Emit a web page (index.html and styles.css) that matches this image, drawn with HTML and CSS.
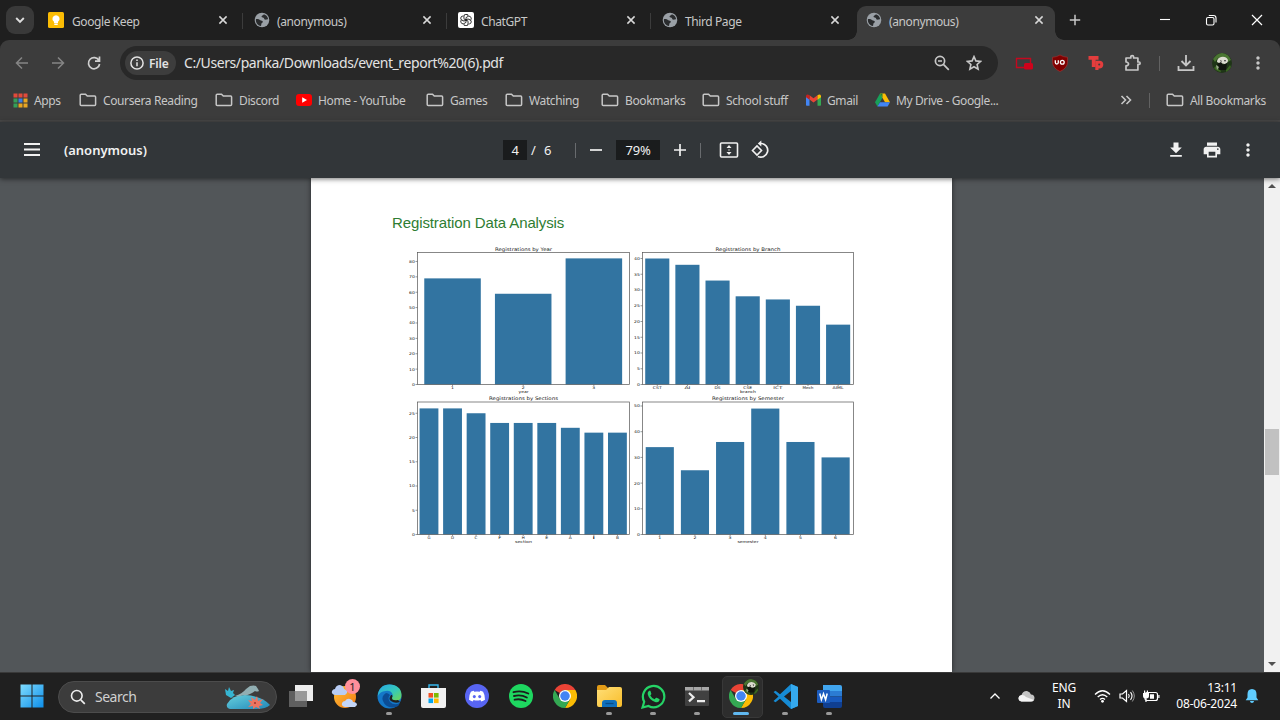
FILE: index.html
```html
<!DOCTYPE html>
<html lang="en">
<head>
<meta charset="utf-8">
<title>(anonymous)</title>
<link rel="stylesheet" href="styles.css">
</head>
<body>
<svg width="0" height="0" class="defs">
  <defs>
    <symbol id="close" viewBox="0 0 10 10"><path d="M1.400 1.400l7.200 7.200M8.600 1.400L1.400 8.600" stroke="currentColor" stroke-width="1.500"/></symbol>
    <symbol id="globe" viewBox="0 0 16 16"><circle cx="8" cy="8" r="7.300" fill="#9aa0a6"/><path d="M1.900 7.200c1.600-.3 3.300.2 4.400 1 .9.6 2.200.3 2.500 1.400.2 1-1.100 1.300-1.400 2.200-.2.7-.1 1.500-.4 2.100C3.600 13.500 1.600 10.500 1.900 7.200zM9.800 2.300c-.2 1.200-1.800 1-2.200 1.900-.4 1 1 1.300 1.900 1.600.7.300.5 1.400 1.300 1.800 1.100.4 2.200-.5 3.300-.3-.2-2.300-2-4.400-4.300-5z" fill="#2a2c2e"/></symbol>
    <symbol id="folder" viewBox="0 0 18 14"><path d="M1.200 2.200q0-1 1-1h4.300l1.800 1.900h7.300q1 0 1 1v7.400q0 1-1 1H2.200q-1 0-1-1z" fill="none" stroke="#c7c7c7" stroke-width="1.500"/></symbol>
    <symbol id="dots" viewBox="0 0 24 24"><path d="M12 8c1.100 0 2-.9 2-2s-.9-2-2-2-2 .9-2 2 .9 2 2 2zm0 2c-1.100 0-2 .9-2 2s.9 2 2 2 2-.9 2-2-.9-2-2-2zm0 6c-1.100 0-2 .9-2 2s.9 2 2 2 2-.9 2-2-.9-2-2-2z" fill="currentColor"/></symbol>
    <symbol id="chrome" viewBox="0 0 48 48"><path d="M24 12H44.800A24 24 0 0 1 24 48L34.400 30z" fill="#fbbc04"/><path d="M3.200 12A24 24 0 0 1 44.800 12H24A12 12 0 0 0 13.600 18z" fill="#ea4335"/><path d="M3.200 12L13.600 30L24 36L34.400 30L24 48A24 24 0 0 1 3.200 12z" fill="#34a853"/><circle cx="24" cy="24" r="12" fill="#fff"/><circle cx="24" cy="24" r="9.500" fill="#4285f4"/></symbol>
    <symbol id="avatar" viewBox="0 0 20 20"><circle cx="10" cy="10" r="10" fill="#1f3517"/><path d="M1 6q4-6 9-6 7 1 9 7l-3 2-5-5-5 1-3 4z" fill="#4a7532"/><path d="M2 15l4-4 3 8q-5-1-7-4zM14 17l4-5 1 2q-2 4-5 5z" fill="#3a6622"/><path d="M5 9q0-4 4-5 5-1 7 3 0 3-3 4l-6-1z" fill="#dcdcd0"/><path d="M5 11l4-2 2 3 4-2-1 7H7z" fill="#10140e"/><path d="M8 7l2 1-1 1zM12 7l2 0-1 2z" fill="#333"/><path d="M4 12l3 2-2 3z" fill="#9ba98c"/></symbol>
    <linearGradient id="win" x1="0" y1="0" x2="1" y2="1"><stop offset="0" stop-color="#7fdcff"/><stop offset="1" stop-color="#0d8ee9"/></linearGradient>
    <linearGradient id="edgeTop" x1="0" y1="0" x2="1" y2="1"><stop offset="0" stop-color="#27a7e5"/><stop offset=".55" stop-color="#36c9b8"/><stop offset="1" stop-color="#75d84b"/></linearGradient>
    <linearGradient id="sea" x1="0" y1="0" x2="1" y2="1"><stop offset="0" stop-color="#67d0dd"/><stop offset="1" stop-color="#2187b8"/></linearGradient>
    <linearGradient id="sun" x1="0" y1="0" x2="1" y2="1"><stop offset="0" stop-color="#ffc23a"/><stop offset="1" stop-color="#f27a12"/></linearGradient>
    <linearGradient id="fold" x1="0" y1="0" x2="1" y2="1"><stop offset="0" stop-color="#ffdf78"/><stop offset="1" stop-color="#f9bd2a"/></linearGradient>
  </defs>
</svg>

<div class="screen">
  <header class="tabstrip">
    <button class="tab-search"><svg width="12" height="12" viewBox="0 0 12 12"><path d="M2.200 4L6 7.800 9.800 4" fill="none" stroke="#dedede" stroke-width="1.900"/></svg></button>
    <div class="tab first"><svg class="fav" viewBox="0 0 16 16"><rect width="16" height="16" rx="1.500" fill="#fbbc04"/><path d="M8 3.200a3.600 3.600 0 0 0-2 6.600V11h4V9.800A3.600 3.600 0 0 0 8 3.200zM6.300 11.600h3.400v1.300H6.300z" fill="#fff"/></svg><span class="tt">Google Keep</span><svg class="x"><use href="#close"/></svg></div>
    <div class="tab"><svg class="fav"><use href="#globe"/></svg><span class="tt">(anonymous)</span><svg class="x"><use href="#close"/></svg></div>
    <div class="tab"><svg class="fav" viewBox="0 0 16 16"><rect width="16" height="16" rx="2" fill="#fff"/><g fill="none" stroke="#222" stroke-width=".9"><path id="lobe" d="M8 5.600L10.300 4.300Q12.500 3.500 13.200 6q.2 1-.4 1.900M8 5.600v2.800"/><use href="#lobe" transform="rotate(60 8 8)"/><use href="#lobe" transform="rotate(120 8 8)"/><use href="#lobe" transform="rotate(180 8 8)"/><use href="#lobe" transform="rotate(240 8 8)"/><use href="#lobe" transform="rotate(300 8 8)"/></g></svg><span class="tt">ChatGPT</span><svg class="x"><use href="#close"/></svg></div>
    <div class="tab last"><svg class="fav"><use href="#globe"/></svg><span class="tt">Third Page</span><svg class="x"><use href="#close"/></svg></div>
    <div class="tab active"><svg class="fav"><use href="#globe"/></svg><span class="tt">(anonymous)</span><svg class="x"><use href="#close"/></svg></div>
    <svg class="newtab" viewBox="0 0 12 12"><path d="M6 .8v10.400M.8 6h10.400" stroke="#c9c9c9" stroke-width="1.500"/></svg>
    <div class="wincontrols">
      <svg width="12" height="12" viewBox="0 0 12 12"><path d="M1 5.500h10" stroke="#fff" stroke-width="1.100"/></svg>
      <svg width="12" height="12" viewBox="0 0 12 12"><rect x="1.500" y="3.500" width="7.500" height="7.500" rx="1.500" fill="none" stroke="#fff" stroke-width="1.100"/><path d="M3.800 1.500h4.700q2.500 0 2.500 2.500v4.500" fill="none" stroke="#fff" stroke-width="1.100"/></svg>
      <svg width="12" height="12" viewBox="0 0 12 12"><path d="M1 1l10 10M11 1L1 11" stroke="#fff" stroke-width="1.200"/></svg>
    </div>
  </header>

  <div class="chrome-top">
    <div class="toolbar">
      <svg class="nav dim" viewBox="0 0 16 16"><path d="M14 8H3M8 2.500L2.500 8 8 13.500" fill="none" stroke="currentColor" stroke-width="1.500"/></svg>
      <svg class="nav dim" viewBox="0 0 16 16"><path d="M2 8h11M8 2.500L13.500 8 8 13.500" fill="none" stroke="currentColor" stroke-width="1.500"/></svg>
      <svg class="nav" viewBox="0 0 16 16"><path d="M13 5.500A5.600 5.600 0 1 0 13.600 9M13.500 1.600v4.600H9" fill="none" stroke="currentColor" stroke-width="1.700"/></svg>
      <div class="omnibox">
        <span class="chip"><svg width="14" height="14" viewBox="0 0 14 14"><circle cx="7" cy="7" r="6.100" fill="none" stroke="#e3e3e3" stroke-width="1.500"/><path d="M7 6.200v4M7 3.500v1.500" stroke="#e3e3e3" stroke-width="1.500"/></svg><b>File</b></span>
        <span class="url">C:/Users/panka/Downloads/event_report%20(6).pdf</span>
        <svg class="oi" viewBox="0 0 16 16"><circle cx="6" cy="6" r="4.600" fill="none" stroke="#c7c7c7" stroke-width="1.700"/><path d="M9.400 9.400l5.400 5.400M4 6h4" stroke="#c7c7c7" stroke-width="1.700"/></svg>
        <svg class="oi" viewBox="0 0 16 16"><path d="M8 1.600l1.900 4.300 4.700.5-3.500 3.100 1 4.600L8 11.700l-4.100 2.400 1-4.600L1.400 6.400l4.700-.5z" fill="none" stroke="#c7c7c7" stroke-width="1.600"/></svg>
      </div>
      <svg class="ext" viewBox="0 0 20 20"><path d="M10.500 14.500H2.500V5.500h14v5" fill="none" stroke="#c4081f" stroke-width="1.400"/><rect x="10" y="10" width="9" height="6.500" rx="1.500" fill="#d0021b"/></svg>
      <svg class="ext" viewBox="0 0 20 20"><path d="M10 2q3 2 7.500 2.300V9q0 6-7.500 9.500Q2.500 15 2.500 9V4.300Q7 4 10 2z" fill="#800000" stroke="#a33" stroke-width=".6"/><path d="M5.300 7.200v2.300q0 1.500 1.500 1.500t1.500-1.500V7.200" fill="none" stroke="#fff" stroke-width="1.300"/><circle cx="12.300" cy="9.200" r="1.900" fill="none" stroke="#fff" stroke-width="1.300"/></svg>
      <svg class="ext" viewBox="0 0 20 20"><path d="M2.500 3h10v3.800H9.600V14H5.800V6.800H2.500z" fill="#e33d3d"/><path d="M9.300 7.800h4q4 .2 4 3.900-.2 3.700-4 3.700h-.8V17H9.300z" fill="#e33d3d"/><circle cx="13.200" cy="11.500" r="1" fill="#3c3c3c"/></svg>
      <svg class="ext" viewBox="0 0 20 20"><path d="M3 5h4.800V3.800q0-1.200 1.400-1.200t1.400 1.200V5h4.300v4h1.200q1 0 1 1.200t-1 1.200h-1.200V17H3v-4.200q2.500-.3 2.500-1.900T3 9z" fill="none" stroke="#c7c7c7" stroke-width="1.700" stroke-linejoin="round"/></svg>
      <i class="vsep"></i>
      <svg class="ext" viewBox="0 0 20 20"><path d="M10 2v10M5.500 8l4.500 4.500L14.500 8M2.500 13v4.200h15V13" fill="none" stroke="#c7c7c7" stroke-width="1.800"/></svg>
      <svg class="ext"><use href="#avatar"/></svg>
      <svg class="ext gray"><use href="#dots"/></svg>
    </div>
    <nav class="bookmarks">
      <span><svg width="15" height="15" viewBox="0 0 15 15"><path d="M.5.500h4v4h-4zM5.500.500h4v4h-4zM10.500.500h4v4h-4z" fill="#e24a3b"/><path d="M.5 5.500h4v4h-4zM.5 10.500h4v4h-4z" fill="#34a058"/><path d="M5.500 5.500h4v4h-4z" fill="#3b7fe5"/><path d="M10.500 5.500h4v4h-4zM5.500 10.500h4v4h-4zM10.500 10.500h4v4h-4z" fill="#e8a623"/></svg>Apps</span>
      <span class="f"><svg width="18" height="14"><use href="#folder"/></svg>Coursera Reading</span>
      <span class="f"><svg width="18" height="14"><use href="#folder"/></svg>Discord</span>
      <span><svg width="16" height="12" viewBox="0 0 16 12"><rect width="16" height="12" rx="3" fill="#f00"/><path d="M6.200 3.300v5.400L11 6z" fill="#fff"/></svg>Home - YouTube</span>
      <span class="f"><svg width="18" height="14"><use href="#folder"/></svg>Games</span>
      <span class="f"><svg width="18" height="14"><use href="#folder"/></svg>Watching</span>
      <span class="f"><svg width="18" height="14"><use href="#folder"/></svg>Bookmarks</span>
      <span class="f"><svg width="18" height="14"><use href="#folder"/></svg>School stuff</span>
      <span><svg width="15" height="12" viewBox="0 0 15 12"><path d="M0 2v9q0 .8.8.8H3.500V4z" fill="#4285f4"/><path d="M15 2v9q0 .8-.8.8h-2.700V4z" fill="#34a853"/><path d="M3.500 1.300l4 3 4-3v4.300l-4 3-4-3z" fill="#ea4335"/><path d="M11.500 1.300Q14-.6 15 1.800V3.200l-3.500 2.500z" fill="#fbbc04"/><path d="M3.500 1.300Q1-.6 0 1.800v1.400l3.500 2.500z" fill="#c5221f"/></svg>Gmail</span>
      <span><svg width="15" height="14" viewBox="0 0 15 14"><path d="M5 .5L0 9.200l2.400 4.300L7.500 4.800z" fill="#18a05a"/><path d="M5 .5h5L15 9.200h-5z" fill="#fbbc04"/><path d="M5 .5h2.500v4.300z" fill="#188038"/><path d="M10 9.200h5l-2.400 4.300H2.400L5 9.200z" fill="#4285f4"/></svg>My Drive - Google...</span>
      <svg class="more" width="12" height="10" viewBox="0 0 12 10"><path d="M1.500 1l4 4-4 4M6.500 1l4 4-4 4" fill="none" stroke="#c7c7c7" stroke-width="1.600"/></svg>
      <i class="vsep"></i>
      <span class="f"><svg width="18" height="14"><use href="#folder"/></svg>All Bookmarks</span>
    </nav>
  </div>

  <div class="pdfbar">
    <svg class="menu" viewBox="0 0 16 13"><path d="M0 1h16M0 6.500h16M0 12h16" stroke="#f1f1f1" stroke-width="1.900"/></svg>
    <b class="doc">(anonymous)</b>
    <span class="box pg">4</span><span class="slash">/</span><span class="total">6</span>
    <i class="psep"></i>
    <svg class="pi" viewBox="0 0 20 20"><path d="M4 10h12" stroke="#f1f1f1" stroke-width="1.700"/></svg>
    <span class="box zm">79%</span>
    <svg class="pi" viewBox="0 0 20 20"><path d="M4 10h12M10 4v12" stroke="#f1f1f1" stroke-width="1.700"/></svg>
    <i class="psep"></i>
    <svg class="pi fit" viewBox="0 0 20 20"><rect x="1.500" y="3" width="17" height="14" rx="1" fill="none" stroke="#f1f1f1" stroke-width="1.600"/><path d="M7.500 8L10 5l2.500 3zM7.500 12L10 15l2.500-3zM9.300 9.500h1.400v1H9.300z" fill="#f1f1f1"/></svg>
    <svg class="pi" viewBox="0 0 20 20"><path d="M1.500 10.500L6 6l4.500 4.500L6 15z" fill="none" stroke="#f1f1f1" stroke-width="1.600"/><path d="M8.500 3.500h1.800a6.800 6.800 0 1 1-3.400 12.900" fill="none" stroke="#f1f1f1" stroke-width="1.700"/><path d="M10.300.5v6L6.800 3.500z" fill="#f1f1f1"/></svg>
    <div class="pright">
      <svg viewBox="0 0 24 24"><path d="M19 9h-4V3H9v6H5l7 7 7-7zM5 18v2h14v-2H5z" fill="#f1f1f1"/></svg>
      <svg viewBox="0 0 24 24"><path d="M19 8H5c-1.660 0-3 1.340-3 3v6h4v4h12v-4h4v-6c0-1.660-1.340-3-3-3zm-3 11H8v-5h8v5zm3-7c-.55 0-1-.45-1-1s.45-1 1-1 1 .45 1 1-.45 1-1 1zm-1-9H6v4h12V3z" fill="#f1f1f1"/></svg>
      <svg class="white"><use href="#dots"/></svg>
    </div>
  </div>

  <main class="viewer">
    <article class="page">
      <h1>Registration Data Analysis</h1>
      <svg id="charts" width="450" height="304" viewBox="408 244 450 304"></svg>
    </article>
    <div class="scrollbar"><i class="up"></i><i class="thumb"></i><i class="down"></i></div>
  </main>

  <footer class="taskbar">
    <div class="task start"><svg width="24" height="24" viewBox="0 0 24 24"><path d="M.5.500h11v11H.500zM12.500.500h11v11h-11zM.5 12.500h11v11H.500zM12.500 12.500h11v11h-11z" fill="url(#win)"/></svg></div>
    <div class="search"><svg width="16" height="16" viewBox="0 0 16 16"><circle cx="6.800" cy="6.800" r="5.300" fill="none" stroke="#eee" stroke-width="1.600"/><path d="M10.800 10.800l4 4" stroke="#eee" stroke-width="1.700"/></svg><span>Search</span>
      <svg class="dolphin" width="48" height="26" viewBox="0 0 48 26"><path d="M3 20q5-9 18-9 17 1 25 10-4 4-14 4H6q-4-1-3-5z" fill="url(#sea)"/><path d="M11 12q7-2 11-7l4-3q4-1 6 0l2 3 1 2q-2 1-4 0-6 5-12 4-4 2-8 1z" fill="#91aeb2"/><path d="M1 5l3 2 1-4 2 4 3-1-1 3 2 2-4 3-5-3z" fill="#36b5d2"/><path d="M24 16l4 1-1-4 4 3 2-4 1 5 5-2-3 4 3 2-4 1 1 3-4-2-3 2v-3l-5 1 3-3z" fill="#ed7561"/><circle cx="31" cy="19" r="1" fill="#9e352c"/></svg></div>
    <div class="task tv"><svg width="26" height="24" viewBox="0 0 26 24"><rect x="7" y="1" width="18" height="16" fill="#ededed"/><rect x="1" y="7" width="18" height="16" fill="#777" fill-opacity=".72"/></svg></div>
    <div class="task weather"><svg width="28" height="28" viewBox="0 0 28 28"><circle cx="14" cy="15" r="11" fill="url(#sun)"/><path d="M4 13q-4-1-3-4 1-2 3-2 1-4 5-4 4 1 4 4 4 1 3 4l-2 2z" fill="#b8cdf4"/><path d="M14 25q-4-1-3-4 1-2 3-2 2-3 5-2 3 1 3 3 4 0 4 3l-2 2z" fill="#c4d6f8"/></svg><em>1</em></div>
    <div class="task run"><svg width="25" height="25" viewBox="0 0 25 25"><circle cx="12.500" cy="12.500" r="12" fill="#1478c8"/><path d="M.7 12Q2 .5 12.500.5 24 1 24.500 11q0 6-7 6-4 0-3-3 2-2 1-4-2-4-7-3Q3 7.500.7 12z" fill="url(#edgeTop)"/><path d="M9 9q-5 3-3 8 3 8 13 6 3-1 4-4-6 3-10-1-3-4 0-7-2-2-4-2z" fill="#0b4d95"/><path d="M14 11q-3 4 0 6 4 3 9 1l-2-2q-6 1-6-2 1-2 0-3z" fill="#202020"/></svg></div>
    <div class="task"><svg width="25" height="25" viewBox="0 0 25 25"><path d="M8 5V1h9v4" fill="none" stroke="#36b7ed" stroke-width="1.400"/><path d="M0 4h25v18q0 2-2 2H2q-2 0-2-2z" fill="#f1f1f1"/><path d="M7.500 9h4.600v4.600H7.500z" fill="#f25022"/><path d="M13 9h4.600v4.600H13z" fill="#7fba00"/><path d="M7.500 14.500h4.600v4.600H7.500z" fill="#00a4ef"/><path d="M13 14.500h4.600v4.600H13z" fill="#ffb900"/></svg></div>
    <div class="task"><svg width="24" height="24" viewBox="0 0 24 24"><circle cx="12" cy="12" r="12" fill="#5865f2"/><path d="M8.700 6.800Q6.800 7.100 5.900 7.700 3.800 11 4 15.800q1.800 1.300 3.700 1.700l.9-1.400q3.400 1 6.800 0l.9 1.400q1.900-.4 3.700-1.700.2-4.800-1.900-8.100-.9-.6-2.800-.9l-.6 1q-2.700-.4-5.400 0z" fill="#fff"/><ellipse cx="9.300" cy="12.600" rx="1.500" ry="1.600" fill="#5865f2"/><ellipse cx="14.700" cy="12.600" rx="1.500" ry="1.600" fill="#5865f2"/></svg></div>
    <div class="task"><svg width="24" height="24" viewBox="0 0 24 24"><circle cx="12" cy="12" r="12" fill="#1ed760"/><path d="M4.500 8.200q7.500-2.200 14.800 1.300M5 12q6.800-1.800 12.800 1.500M5.600 15.700q5.800-1.400 10.900 1.300" fill="none" stroke="#1c1c1c" stroke-width="1.900" stroke-linecap="round"/></svg></div>
    <div class="task"><svg width="24" height="24"><use href="#chrome"/></svg></div>
    <div class="task run"><svg width="25" height="24" viewBox="0 0 25 24"><path d="M0 3q0-2 2-2h6l3 3v4H0z" fill="#e39c17"/><path d="M0 6h9l3-3h11q2 0 2 2v16q0 2-2 2H2q-2 0-2-2z" fill="url(#fold)"/><path d="M5 23v-4q0-3 3-3h9q3 0 3 3v4z" fill="#0f6fbb"/><path d="M8.500 19.500h8" stroke="#084b86" stroke-width="1.300"/></svg></div>
    <div class="task run"><svg width="25" height="25" viewBox="0 0 25 25"><path d="M1.500 23.500l1.700-5.800A10.700 10.700 0 1 1 7.500 22z" fill="none" stroke="#25d366" stroke-width="2.200"/><path d="M8.800 6.500q-2.600 1-2 4 1.500 5.500 7.300 7.600 3 .9 4.300-1.600.5-1.200-.1-1.500L15.700 13.700q-.6-.2-1 .3l-1 1.300q-3-1.200-4.400-3.900l1.100-1.500L9.500 7q-.2-.5-.7-.5z" fill="#25d366"/></svg></div>
    <div class="task run"><svg width="24" height="19" viewBox="0 0 24 19"><rect width="24" height="19" rx="1" fill="#414141"/><path d="M0 0h24v3.500H0z" fill="#a7a7a7"/><path d="M8 0h.7v3.500H8zM16 0h.7v3.500H16z" fill="#555"/><path d="M4 6l4.500 4.200L4 14.400M12 14.200h8" fill="none" stroke="#eee" stroke-width="2.200"/></svg></div>
    <div class="task run current"><svg width="24" height="24"><use href="#chrome"/></svg><svg class="profile"><use href="#avatar"/></svg></div>
    <div class="task run"><svg width="25" height="25" viewBox="0 0 25 25"><path d="M18 0l7 3v19l-7 3L7 14.800 2.500 18.300.5 17l5-4.500-5-4.500 2-1.300L7 10.200zm0 7l-7 5.500 7 5.500z" fill="#168bd4"/><path d="M18 0l7 3v19l-7 3z" fill="#35a9ee"/></svg></div>
    <div class="task run"><svg width="25" height="23" viewBox="0 0 25 23"><path d="M6 0h17q2 0 2 2v4H6z" fill="#41a5ee"/><path d="M6 6h19v5.500H6z" fill="#2b7cd3"/><path d="M6 11.500h19V17H6z" fill="#185abd"/><path d="M6 17h19v4q0 2-2 2H8q-2 0-2-2z" fill="#103f91"/><rect y="5" width="13" height="13" rx="1" fill="#1c5cbf"/><path d="M2.800 8.500l1.600 6.200 2.100-6 2.100 6 1.600-6.200" fill="none" stroke="#fff" stroke-width="1.500"/></svg></div>
    <div class="tray">
      <svg width="12" height="12" viewBox="0 0 12 12"><path d="M1.500 8.500L6 4l4.500 4.500" fill="none" stroke="#fff" stroke-width="1.300"/></svg>
      <svg width="17" height="12" viewBox="0 0 17 12"><path d="M3.500 11.500Q.5 11 .5 8q.2-2.600 3-3Q5 .7 9 1q3 .5 4 3.500 3.500.3 3.500 3.600-.2 3.400-3.500 3.400z" fill="#c4c4c4"/><path d="M3.500 5q3-.2 4.500 2l8 3q-1 1.500-3 1.500H3.500Q.5 11 .5 8q.2-2.600 3-3z" fill="#f4f4f4"/></svg>
      <span class="lang">ENG<br>IN</span>
      <svg width="17" height="14" viewBox="0 0 17 14"><path d="M1 5.500q7.500-7.500 15 0M3.700 8q4.800-4.600 9.600 0M6 10.500q2.500-2.200 5 0" fill="none" stroke="#fff" stroke-width="1.300"/><circle cx="8.500" cy="12.300" r="1.400" fill="#fff"/></svg>
      <svg width="16" height="14" viewBox="0 0 16 14"><path d="M1 5h2.500L7.500 1.500v11L3.500 9H1z" fill="none" stroke="#fff" stroke-width="1.200"/><path d="M9.500 5q1.500 2 0 4M11.500 3.200q3 3.800 0 7.600" fill="none" stroke="#fff" stroke-width="1.100"/><path d="M13.300 1.500q4 5.500 0 11" fill="none" stroke="#999" stroke-width="1"/></svg>
      <svg width="18" height="14" viewBox="0 0 18 14"><rect x="3" y="3.500" width="12.500" height="8" rx="2" fill="none" stroke="#fff" stroke-width="1.200"/><path d="M8 5.300h4v4.400H8zM16.300 6h1.200v3h-1.200z" fill="#fff"/><path d="M1 4h6v3q0 2.500-3 2.500T1 7zM2 1.500h1.200V4H2zM4.800 1.500H6V4H4.800zM3.400 9h1.200v4H3.400z" fill="#fff"/></svg>
      <span class="clock">13:11<br>08-06-2024</span>
      <svg width="14" height="16" viewBox="0 0 14 16"><path d="M7 1q4.500.2 4.500 5v3.500l1.800 2.700H.7L2.500 9.500V6Q2.500 1.200 7 1zM4.900 13h4.200Q8.700 15 7 15T4.900 13z" fill="#60cdff"/></svg>
    </div>
  </footer>
</div>
<script src="charts.js"></script>
</body>
</html>
```
FILE: styles.css
```css
* { box-sizing: border-box; }
body { margin: 0; font: 12px "Noto Sans", "Open Sans", sans-serif; color: #c7c7c7; background: #202020; overflow: hidden; }
svg { display: block; flex: none; }
button { border: 0; padding: 0; }
.defs { position: absolute; }
.screen { width: 1280px; height: 720px; display: flex; flex-direction: column; overflow: hidden; }

.tabstrip { height: 40px; flex: none; display: flex; padding-left: 6px; background: #1f1f1f; }
.tab-search { width: 28px; height: 28px; margin: 6px 5px 0 0; border-radius: 9px; background: #393939; display: grid; place-items: center; }
.tab { width: 204px; height: 40px; display: flex; align-items: center; padding: 0 15px 0 11px; background: linear-gradient(#3c3c3c, #3c3c3c) no-repeat 100% 13px / 1px 16px; }
.tab.first { padding-left: 9px; }
.tab.last { background: none; }
.fav { width: 16px; height: 16px; margin-right: 7px; }
.first .fav { margin-right: 8px; }
.tt { flex: 1; white-space: nowrap; padding-top: 2px; letter-spacing: -.4px; }
.x { width: 10px; height: 10px; color: #d8d8d8; }
.tab.active { width: 198px; height: 34px; margin: 6px 0 0 2px; padding: 0 11px 6px 9px; border-radius: 9px 9px 0 0; background: #3c3c3c; position: relative; }
.tab.active::before, .tab.active::after { content: ""; position: absolute; bottom: 0; width: 9px; height: 9px; }
.tab.active::before { left: -9px; background: radial-gradient(circle at 0 0, transparent 8.5px, #3c3c3c 9px); }
.tab.active::after { right: -9px; background: radial-gradient(circle at 100% 0, transparent 8.5px, #3c3c3c 9px); }
.newtab { width: 12px; height: 12px; margin: 14px 0 0 14px; }
.wincontrols { margin-left: auto; display: flex; gap: 34px; padding: 14px 17px 0 0; }

.chrome-top { height: 82px; flex: none; background: #3c3c3c; border-bottom: 2px solid #484848; border-radius: 9px 9px 0 0; }
.toolbar { height: 46px; display: grid; align-items: center; justify-items: center; grid-template-columns: 36px 36px 36px 894px 36px 36px 36px 37px 17px 36px 36px 36px; padding-left: 4px; }
.nav { width: 16px; height: 16px; color: #cfcfcf; }
.nav.dim { color: #858585; }
.omnibox { width: 878px; height: 34px; border-radius: 17px; background: #282828; display: flex; align-items: center; padding: 0 16px 0 5px; }
.chip { width: 51px; height: 24px; border-radius: 12px; background: #3d3d3d; display: flex; align-items: center; gap: 5px; padding-left: 5px; color: #e3e3e3; letter-spacing: -.2px; }
.chip b { font-weight: 600; }
.url { flex: 1; margin: -1px 0 0 8px; font-size: 14px; letter-spacing: -.41px; color: #e3e3e3; white-space: nowrap; }
.oi { width: 16px; height: 16px; margin-left: 16px; }
.ext { width: 20px; height: 20px; }
.gray { color: #c7c7c7; }
.vsep { width: 1px; height: 15px; background: #626262; }
.bookmarks { height: 28px; display: grid; align-items: center; grid-template-columns: 66px 136px 81px 130px 79px 96px 101px 104px 69px 245px 29px 17px 110px; padding-left: 13px; letter-spacing: -.38px; }
.bookmarks span { display: flex; align-items: center; gap: 6px; white-space: nowrap; }

.pdfbar { height: 56px; flex: none; display: flex; align-items: center; background: #323639; color: #f1f1f1; font-size: 13px; padding-left: 24px; position: relative; z-index: 1; box-shadow: 0 1px 5px rgba(0,0,0,.55); }
.menu { width: 16px; height: 13px; margin: 0 24px 1px 0; }
.doc { width: 439px; font-size: 13px; font-weight: 600; }
.box { height: 20px; background: #1a1c1d; text-align: center; line-height: 20px; letter-spacing: -.3px; }
.pg { width: 24px; }
.slash { width: 17px; padding-left: 4px; }
.total { width: 31px; text-align: left; }
.psep { width: 1px; height: 15px; background: #686b6e; }
.pi { width: 20px; height: 20px; margin: 0 10px; }
.zm { width: 44px; }
.fit { margin: 0 12px 0 18px; }
.fit + .pi { margin-left: 0; }
.pright { margin-left: auto; display: flex; gap: 16px; padding: 0 22px 1px 0; }
.pright svg { width: 20px; height: 20px; }
.white { color: #f1f1f1; }

.viewer { height: 494px; flex: none; display: flex; background: #525659; padding-left: 311px; }
.page { width: 641px; background: #fff; box-shadow: 0 0 5px rgba(0,0,0,.55); }
.page h1 { margin: 34px 0 0 81px; height: 22px; font: 15px/22px "Liberation Sans", Arial, sans-serif; letter-spacing: -.11px; color: #2e7d32; }
#charts { margin: 10px 0 0 97px; }
.ct { font-family: "DejaVu Sans", sans-serif; fill: #111; text-anchor: middle; }
.cn { font-family: "DejaVu Sans", sans-serif; fill: #111; text-anchor: end; }
.scrollbar { width: 16px; margin-left: auto; background: #f1f1f1; display: flex; flex-direction: column; align-items: center; padding: 6px 0; }
.up { border: 4px solid transparent; border-top: 0; border-bottom-color: #505050; }
.thumb { width: 14px; height: 46px; margin-top: 241px; background: #c1c1c1; }
.down { border: 4px solid transparent; border-bottom: 0; border-top-color: #505050; margin-top: auto; }

.taskbar { height: 48px; flex: none; display: flex; align-items: center; background: #202020; border-top: 1px solid #393939; padding-left: 10px; }
.task { width: 44px; height: 47px; display: grid; place-items: center; position: relative; padding-bottom: 1px; }
.start { margin-right: 4px; }
.search { width: 219px; height: 32px; margin-right: 2px; border-radius: 16px; background: #3c3c3c; border: 1px solid #4c4c4c; display: flex; align-items: center; padding: 0 4px 0 11px; font-size: 14px; color: #d0d0d0; }
.search span { flex: 1; margin: -1px 0 0 9px; letter-spacing: -.5px; }
.run::after { content: ""; position: absolute; left: 19px; bottom: 5px; width: 6px; height: 3px; border-radius: 2px; background: #999; }
.weather em { position: absolute; left: 22px; top: 6px; width: 15px; height: 15px; border-radius: 50%; background: #ff8f9b; color: #222; font: 11px/15px "Noto Sans", sans-serif; text-align: center; }
.current::before { content: ""; position: absolute; left: 3px; top: 3px; width: 39px; height: 40px; border-radius: 5px; background: #2d2d2d; border: 1px solid #383838; }
.current svg { position: relative; }
.current .profile { position: absolute; width: 16px; height: 16px; left: 24px; top: 6px; }
.current::after { left: 14px; width: 16px; background: #60b8f0; }
.tray { margin-left: auto; display: grid; grid-template-columns: 32px 31px 44px 33px 15px 34px 76px 16px; align-items: center; justify-items: center; padding: 0 20px 1px 0; color: #fff; line-height: 16px; letter-spacing: -.2px; }
.lang { text-align: center; }
.clock { text-align: right; justify-self: end; padding-right: 7px; white-space: nowrap; }
```
FILE: charts.js
```js
const charts = [
  { title: "Registrations by Year", tw: 57, label: "year", lw: 10, x: 417.5, y: 252.5, w: 212, unit: 1.538, step: 10, max: 80, names: ["1", "2", "3"], values: [69, 59, 82] },
  { title: "Registrations by Branch", tw: 65, label: "branch", lw: 16, x: 642.5, y: 252.5, w: 211, unit: 3.15, step: 5, max: 40, names: ["CST", "AI", "DS", "CSE", "ICT", "Mech", "AIML"], values: [40, 38, 33, 28, 27, 25, 19] },
  { title: "Registrations by Sections", tw: 69, label: "section", lw: 17, x: 417.5, y: 402, w: 212, unit: 4.85, step: 5, max: 25, names: [..."GDCFHEAIB"], values: [26, 26, 25, 23, 23, 23, 22, 21, 21] },
  { title: "Registrations by Semester", tw: 72, label: "semester", lw: 21, x: 642.5, y: 402, w: 211, unit: 2.57, step: 10, max: 50, names: [..."123456"], values: [34, 25, 36, 49, 36, 30] }
];
const text = (cls, x, y, size, len, s) =>
  `<text class="${cls}" x="${x}" y="${y}" font-size="${size}" textLength="${len}" lengthAdjust="spacingAndGlyphs">${s}</text>`;
let out = "";
for (const c of charts) {
  const base = Math.floor(c.y) + 132.5, mid = c.x + c.w / 2, pitch = c.w / c.values.length;
  out += text("ct", mid, c.y - 1.7, 4.8, c.tw, c.title);
  c.values.forEach((v, i) => {
    const cx = c.x + pitch * (i + .5) - .3, h = v * c.unit, n = c.names[i];
    out += `<rect x="${cx - pitch * .4}" y="${base - h}" width="${pitch * .8}" height="${h}" fill="#3274a1"/>`;
    out += `<path d="M${cx} ${base}v1.500" stroke="#555" stroke-width=".6"/>`;
    out += text("ct", cx, base + 4.6, 3.8, n.length === 4 ? 11 : n.length * 3, n);
  });
  for (let t = 0; t <= c.max; t += c.step) {
    const y = base - t * c.unit;
    out += `<path d="M${c.x} ${y}h-2" stroke="#555" stroke-width=".6"/>`;
    out += text("cn", c.x - 2.6, y + 1.4, 3.8, t > 9 ? 5.8 : 2.9, t);
  }
  out += `<rect x="${c.x}" y="${c.y}" width="${c.w}" height="${base - c.y}" fill="none" stroke="#555" stroke-width=".7"/>`;
  out += text("ct", mid, base + 8.6, 3.8, c.lw, c.label);
}
document.getElementById("charts").innerHTML = out;
```
